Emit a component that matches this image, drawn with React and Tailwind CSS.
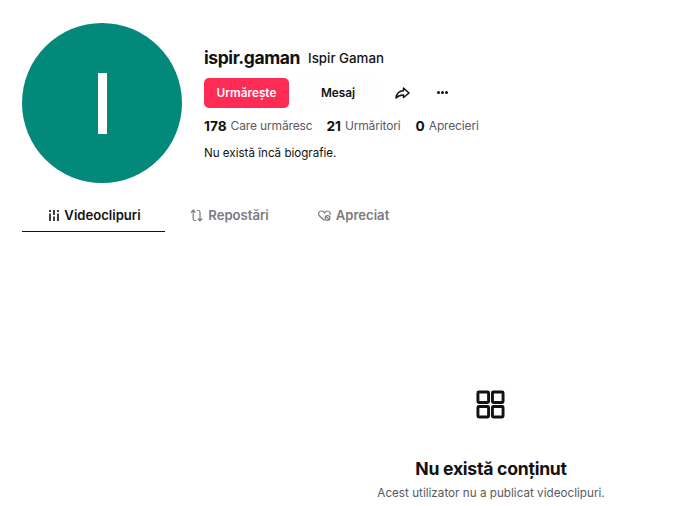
import React from "react";

const Stat = ({ n, label, className }) => (
  <div className={"flex items-center gap-[4px] " + className}>
    <span className="text-[13.7px] leading-[20px] font-bold text-[#121212]">{n}</span>
    <span className="text-[12px] leading-[20px] tracking-[-0.15px] text-[#5a5a60]">{label}</span>
  </div>
);

const Tab = ({ icon, label, active, className }) => (
  <div className={"h-[37px] pt-[5px] flex items-center justify-center gap-[5px] text-[13.1px] font-semibold " + (active ? "text-[#121212] border-b-[1.5px] border-[#121212] " : "text-[#7b7b80] border-b-[1.5px] border-transparent ") + className}>
    {icon}
    <span>{label}</span>
  </div>
);

export default function App() {
  return (
    <div className="w-[700px] h-[506px] overflow-hidden bg-white" style={{ fontFamily: "Inter, 'Liberation Sans', sans-serif" }}>
      <div className="flex pl-[22px] pt-[23px]">
        <div className="w-[160px] h-[160px] rounded-full bg-[#02897a] flex items-center justify-center">
          <div className="w-[9px] h-[61px] bg-white"></div>
        </div>
        <div className="ml-[22px] pt-[22px] flex flex-col">
          <div className="flex items-center h-[26px]">
            <span className="text-[17.5px] leading-[26px] font-bold tracking-[-0.4px] text-[#121212]">ispir.gaman</span>
            <span className="ml-[8px] text-[13.3px] leading-[26px] font-medium text-[#121212]">Ispir Gaman</span>
          </div>
          <div className="flex items-center mt-[7px] h-[30px]">
            <div className="w-[85px] h-[30px] pt-[1px] rounded-[5px] bg-[#fe2c55] text-white text-[11.8px] font-semibold flex items-center justify-center">Urmărește</div>
            <div className="ml-[8px] w-[84px] h-[30px] pt-[1px] pr-[2px] rounded-[5px] bg-[#fefefe] text-[#121212] text-[11.8px] font-semibold flex items-center justify-center">Mesaj</div>
            <div className="ml-[6px] w-[30px] h-[30px] flex items-center justify-center">
              <svg width="15" height="12" viewBox="0 0 15 12" fill="none" stroke="#121212" strokeWidth="1.5" strokeLinejoin="round">
                <path d="M8.5 1 L14 6 L8.5 10.5 V8 C5 8 3 9 1 11 C1.5 7 4 4 8.5 3.8 Z" />
              </svg>
            </div>
            <div className="ml-[10px] w-[30px] h-[30px] pb-[1px] flex items-center justify-center gap-[1px]">
              <span className="w-[3px] h-[3px] rounded-full bg-[#121212]"></span>
              <span className="w-[3px] h-[3px] rounded-full bg-[#121212]"></span>
              <span className="w-[3px] h-[3px] rounded-full bg-[#121212]"></span>
            </div>
          </div>
          <div className="flex items-center mt-[8px] h-[20px]">
            <Stat n="178" label="Care urmăresc" />
            <Stat n="21" label="Urmăritori" className="ml-[14px]" />
            <Stat n="0" label="Aprecieri" className="ml-[15px]" />
          </div>
          <div className="mt-[8px] text-[11.6px] leading-[18px] text-[#121212]">Nu există încă biografie.</div>
        </div>
      </div>

      <div className="flex ml-[22px] mt-[12px]">
        <Tab
          active
          className="w-[143px] pl-[3px]"
          label="Videoclipuri"
          icon={
            <svg width="10" height="11" viewBox="0 0 10 11" fill="#121212">
              <rect x="0.2" y="0" width="1.6" height="2" /><rect x="0.2" y="3.5" width="1.6" height="7.5" />
              <rect x="4.2" y="0" width="1.6" height="5" /><rect x="4.2" y="6.5" width="1.6" height="4.5" />
              <rect x="8.2" y="0" width="1.6" height="2" /><rect x="8.2" y="3.5" width="1.6" height="7.5" />
            </svg>
          }
        />
        <Tab
          className="w-[130px] pr-[1px]"
          label="Repostări"
          icon={
            <svg width="13" height="13" viewBox="0 0 13 13" fill="none" stroke="#7b7b80" strokeWidth="1.2">
              <path d="M1 3.5 L3.2 1.2 L5.4 3.5 M3.2 1.5 V10 Q3.2 11.5 5 11.5 H6.2" />
              <path d="M7 1.5 H8.2 Q10 1.5 10 3 V11.5 M7.8 9.5 L10 11.8 L12.2 9.5" />
            </svg>
          }
        />
        <Tab
          className="w-[118px] pr-[1px]"
          label="Apreciat"
          icon={
            <svg width="13" height="12" viewBox="0 0 13 12" fill="none" stroke="#7b7b80" strokeWidth="1.2">
              <path d="M6.5 10.5 L1.5 6 C-0.5 3.5 1.5 1 3.5 1 C5 1 6 2 6.5 3 C7 2 8 1 9.5 1 C11.5 1 12.8 3 12 5" />
              <circle cx="9.5" cy="8" r="2.4" />
              <path d="M7.8 6.3 L11.2 9.7" />
            </svg>
          }
        />
      </div>

      <div className="ml-[267px] w-[448px] mt-[158px] flex flex-col items-center">
        <svg className="-translate-x-[1px]" width="29" height="29" viewBox="0 0 30 30" fill="none" stroke="#121212" strokeWidth="3" strokeLinejoin="round">
          <rect x="2" y="2" width="11" height="11" rx="1" />
          <rect x="17" y="2" width="11" height="11" rx="1" />
          <rect x="2" y="17" width="11" height="11" rx="1" />
          <rect x="17" y="17" width="11" height="11" rx="1" />
        </svg>
        <div className="mt-[37px] text-[17.6px] leading-[26px] font-bold tracking-[-0.25px] text-[#121212]">Nu există conținut</div>
        <div className="mt-[2px] text-[11.7px] leading-[18px] text-[#5a5a60]">Acest utilizator nu a publicat videoclipuri.</div>
      </div>
    </div>
  );
}
